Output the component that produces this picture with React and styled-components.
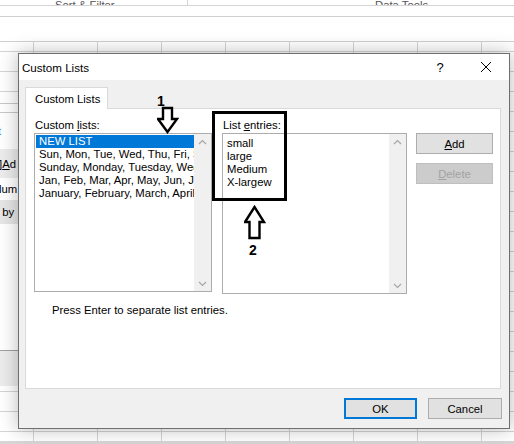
import React from "react";
import styled, { createGlobalStyle } from "styled-components";

const GlobalStyle = createGlobalStyle`
  body {
    margin: 0;
    font-family: "Liberation Sans", Arial, sans-serif;
  }
`;

const Screen = styled.div`
  position: relative;
  width: 514px;
  height: 444px;
  overflow: hidden;
  background: #fff;
  display: flex;
  flex-direction: column;
  font-size: 11.3px;
  color: #000;
`;

/* ---------- excel sheet behind ---------- */

const RibbonLabels = styled.div`
  height: 5px;
  display: flex;
  align-items: flex-end;
  overflow: hidden;
  border-bottom: 1px solid #d4d4d4;
  color: #555;
`;

const RibbonLabel = styled.span`
  flex: 0 0 ${(p) => p.$w}px;
  box-sizing: border-box;
  padding-left: ${(p) => p.$pad}px;
  line-height: 12px;
  margin-bottom: -6px;
  border-right: ${(p) => (p.$sep ? "1px solid #d4d4d4" : "none")};
`;

const SheetStrip = styled.div`
  height: ${(p) => p.$h}px;
  border-bottom: 1px solid #d0d0d0;
`;

const Grid = styled.div`
  flex: 1;
  background-color: #fff;
  background-image:
    repeating-linear-gradient(to right, transparent 0 32px, #d4d4d4 32px 33px, transparent 33px 64px),
    repeating-linear-gradient(to bottom, transparent 0 9px, #d4d4d4 9px 10px, transparent 10px 20px);
  background-position: 1px 0, 0 0;
`;

const SheetFooter = styled.div`
  height: 3px;
  background: #d6d6d6;
`;

const BehindWindow = styled.div`
  position: absolute;
  left: 0;
  top: 100px;
  width: 30px;
  height: 286px;
  display: flex;
  flex-direction: column;
  background: #fff;
  overflow: hidden;
  white-space: nowrap;
`;

const BehindLine = styled.div`
  height: ${(p) => p.$h}px;
  border-bottom: 1px solid #c8c8c8;
`;

const BehindRow = styled.div`
  height: ${(p) => p.$h}px;
  display: flex;
  align-items: center;
  background: ${(p) => p.$bg || "#fff"};
  color: ${(p) => p.$color || "#000"};
  margin-left: ${(p) => p.$shift || 0}px;
  flex: ${(p) => (p.$grow ? 1 : "none")};
  border-top: ${(p) => (p.$top ? "1px solid #a0a0a0" : "none")};
`;

/* ---------- dialog ---------- */

const Dialog = styled.div`
  position: absolute;
  left: 18px;
  top: 53px;
  width: 492px;
  height: 376px;
  box-sizing: border-box;
  border: 1px solid #6f6f6f;
  box-shadow: 0 0 18px rgba(0, 0, 0, 0.28);
  display: flex;
  flex-direction: column;
  background: #f0f0f0;
`;

const TitleBar = styled.div`
  height: 26px;
  background: #fff;
  display: flex;
  align-items: center;
  padding-left: 3px;
`;

const Title = styled.span`
  flex: 1;
  font-size: 11.6px;
`;

const TitleButton = styled.div`
  width: 46px;
  height: 26px;
  display: flex;
  align-items: center;
  justify-content: center;
  font-size: 13px;
`;

const Body = styled.div`
  flex: 1;
  display: flex;
  flex-direction: column;
  padding: 7px 8px 0 6px;
`;

const TabRow = styled.div`
  display: flex;
  height: 21px;
  position: relative;
  z-index: 1;
`;

const Tab = styled.div`
  width: 83px;
  height: 22px;
  box-sizing: border-box;
  background: #fff;
  border: 1px solid #d9d9d9;
  border-bottom: none;
  display: flex;
  align-items: center;
  padding-left: 9px;
`;

const Panel = styled.div`
  height: 281px;
  box-sizing: border-box;
  background: #fff;
  border: 1px solid #d9d9d9;
  padding: 10px 0 0 8px;
  display: flex;
  flex-direction: column;
`;

const Columns = styled.div`
  display: flex;
  align-items: flex-start;
`;

const Column = styled.div`
  display: flex;
  flex-direction: column;
  margin-left: ${(p) => p.$gap || 0}px;
`;

const FieldLabel = styled.div`
  height: 14px;
  line-height: 12px;
  padding-left: 1px;
`;

const ListBox = styled.div`
  width: ${(p) => p.$w}px;
  height: ${(p) => p.$h}px;
  box-sizing: border-box;
  border: 1px solid #acacac;
  display: flex;
  background: #fff;
`;

const ListItems = styled.div`
  flex: 1;
  padding: ${(p) => p.$pad};
  overflow: hidden;
  white-space: nowrap;
`;

const ListItem = styled.div`
  height: 13px;
  line-height: 13px;
  padding-left: ${(p) => p.$indent}px;
  background: ${(p) => (p.$selected ? "#0078d7" : "transparent")};
  color: ${(p) => (p.$selected ? "#fff" : "#000")};
`;

const ScrollBar = styled.div`
  width: 17px;
  background: #f0f0f0;
  display: flex;
  flex-direction: column;
  justify-content: space-between;
  align-items: center;
  padding: 5px 0 4px;
`;

const ButtonStack = styled.div`
  display: flex;
  flex-direction: column;
  gap: 9px;
  margin-left: 9px;
  margin-top: 14px;
`;

const Button = styled.div`
  width: ${(p) => p.$w || 77}px;
  height: 21px;
  box-sizing: border-box;
  display: flex;
  align-items: center;
  justify-content: center;
  background: ${(p) => (p.$disabled ? "#cccccc" : "#e1e1e1")};
  color: ${(p) => (p.$disabled ? "#a3a3a3" : "#000")};
  border: ${(p) =>
    p.$default ? "2px solid #0078d7" : `1px solid ${p.$disabled ? "#bfbfbf" : "#adadad"}`};
`;

const Hint = styled.div`
  margin: 9px 0 0 18px;
  line-height: 14px;
`;

const Footer = styled.div`
  display: flex;
  justify-content: flex-end;
  gap: 11px;
  padding: 9px 0 0;
  margin-right: -1px;
`;

/* ---------- annotations ---------- */

const Highlight = styled.div`
  position: absolute;
  left: 212px;
  top: 111px;
  width: 75px;
  height: 90px;
  box-sizing: border-box;
  border: 3px solid #000;
`;

const Marker = styled.div`
  position: absolute;
  left: ${(p) => p.$x}px;
  top: ${(p) => p.$y}px;
  font-weight: bold;
  font-size: 14px;
  line-height: 14px;
`;

const ArrowSvg = styled.svg`
  position: absolute;
  left: ${(p) => p.$x}px;
  top: ${(p) => p.$y}px;
`;

const Chevron = ({ up }) => (
  <svg width="9" height="6" viewBox="0 0 9 6">
    <polyline
      points={up ? "1,5 4.5,1.5 8,5" : "1,1 4.5,4.5 8,1"}
      fill="none"
      stroke="#a6a6a6"
      strokeWidth="1.2"
    />
  </svg>
);

const CloseIcon = () => (
  <svg width="12" height="12" viewBox="0 0 12 12">
    <path d="M1 1 L11 11 M11 1 L1 11" stroke="#000" strokeWidth="1" />
  </svg>
);

const DownArrow = () => (
  <ArrowSvg $x={157} $y={106} width="22" height="28" viewBox="0 0 22 28">
    <path
      d="M6 2 H15 V13 H20 L10.5 26 L1 13 H6 Z"
      fill="#fff"
      stroke="#000"
      strokeWidth="2.4"
      strokeLinejoin="miter"
    />
  </ArrowSvg>
);

const UpArrow = () => (
  <ArrowSvg $x={244} $y={205} width="22" height="36" viewBox="0 0 22 36">
    <path
      d="M10.5 2 L20 17 H15.5 V33 H5.5 V17 H1 Z"
      fill="#fff"
      stroke="#000"
      strokeWidth="2.4"
    />
  </ArrowSvg>
);

const customLists = [
  "NEW LIST",
  "Sun, Mon, Tue, Wed, Thu, Fri, Sat",
  "Sunday, Monday, Tuesday, Wednesday, Thursday",
  "Jan, Feb, Mar, Apr, May, Jun, Jul, Aug",
  "January, February, March, April, May",
];

const entries = ["small", "large", "Medium", "X-largew"];

export default function App() {
  return (
    <>
      <GlobalStyle />
      <Screen>
        <RibbonLabels>
          <RibbonLabel $w={188} $pad={55} $sep>Sort &amp; Filter</RibbonLabel>
          <RibbonLabel $w={326} $pad={187}>Data Tools</RibbonLabel>
        </RibbonLabels>
        <SheetStrip $h={10} />
        <SheetStrip $h={24} />
        <Grid />
        <SheetFooter />

        <BehindWindow>
          <BehindLine $h={3} />
          <BehindLine $h={8} />
          <BehindRow $h={36} $color="#3c8ad8" $shift={-2}>t</BehindRow>
          <BehindRow $h={29} $bg="#ececec" $shift={-1}>
            ]<u>A</u>d
          </BehindRow>
          <BehindRow $h={22} $shift={-1}>lum</BehindRow>
          <BehindRow $h={24} $bg="#e6e6e6" $shift={-4}>t by</BehindRow>
          <BehindRow $grow />
          <BehindRow $h={35} $bg="#ececec" $top />
        </BehindWindow>

        <Dialog>
          <TitleBar>
            <Title>Custom Lists</Title>
            <TitleButton>?</TitleButton>
            <TitleButton>
              <CloseIcon />
            </TitleButton>
          </TitleBar>
          <Body>
            <TabRow>
              <Tab>Custom Lists</Tab>
            </TabRow>
            <Panel>
              <Columns>
                <Column>
                  <FieldLabel>
                    Custom <u>l</u>ists:
                  </FieldLabel>
                  <ListBox $w={178} $h={159}>
                    <ListItems $pad="1px 0 0 1px">
                      {customLists.map((item, i) => (
                        <ListItem key={item} $indent={3} $selected={i === 0}>
                          {item}
                        </ListItem>
                      ))}
                    </ListItems>
                    <ScrollBar>
                      <Chevron up />
                      <Chevron />
                    </ScrollBar>
                  </ListBox>
                </Column>
                <Column $gap={10}>
                  <FieldLabel>
                    List <u>e</u>ntries:
                  </FieldLabel>
                  <ListBox $w={185} $h={161}>
                    <ListItems $pad="3px 0 0 4px">
                      {entries.map((item) => (
                        <ListItem key={item} $indent={0}>
                          {item}
                        </ListItem>
                      ))}
                    </ListItems>
                    <ScrollBar>
                      <Chevron up />
                      <Chevron />
                    </ScrollBar>
                  </ListBox>
                </Column>
                <ButtonStack>
                  <Button>
                    <u>A</u>dd
                  </Button>
                  <Button $disabled>
                    <u>D</u>elete
                  </Button>
                </ButtonStack>
              </Columns>
              <Hint>Press Enter to separate list entries.</Hint>
            </Panel>
            <Footer>
              <Button $w={73} $default>OK</Button>
              <Button $w={74}>Cancel</Button>
            </Footer>
          </Body>
        </Dialog>

        <Highlight />
        <Marker $x={157} $y={94}>1</Marker>
        <DownArrow />
        <UpArrow />
        <Marker $x={249} $y={243}>2</Marker>
      </Screen>
    </>
  );
}
